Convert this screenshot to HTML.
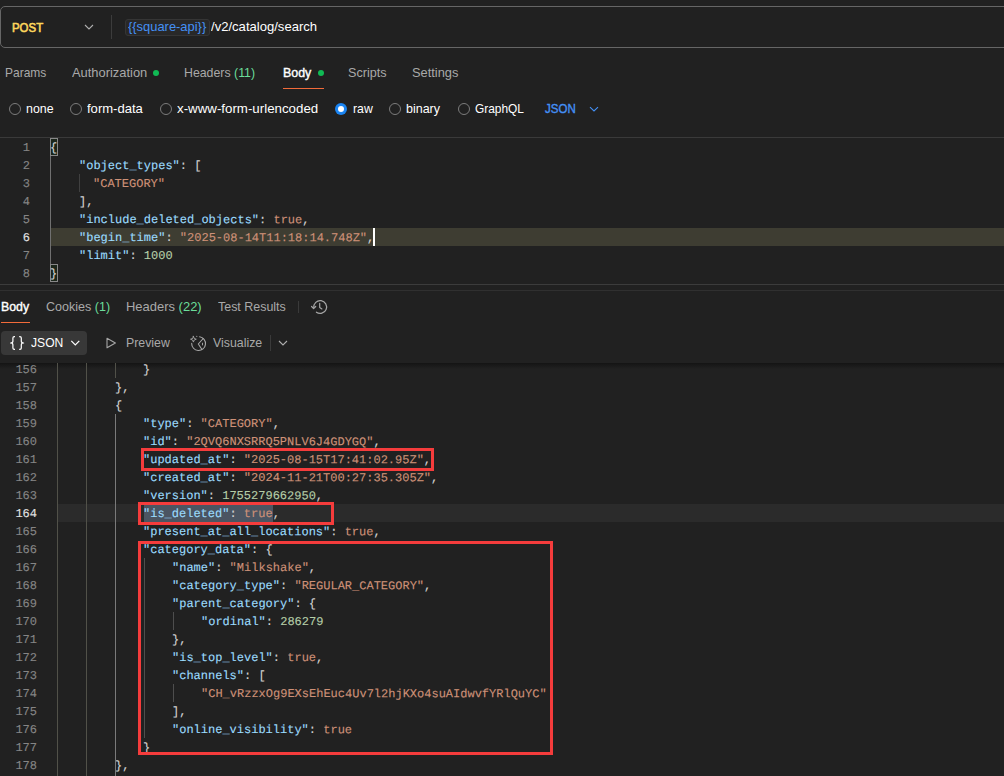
<!DOCTYPE html>
<html lang="en"><head><meta charset="utf-8"><title>Postman</title>
<style>
html,body{margin:0;padding:0;}
body{width:1004px;height:776px;overflow:hidden;background:#212121;position:relative;font-family:"Liberation Sans",sans-serif;font-size:13px;color:#a6a6a6;}
.a{position:absolute;white-space:nowrap;}
.t{position:absolute;white-space:nowrap;line-height:16px;height:16px;font-size:13px;color:#a9a9a9;transform-origin:0 50%;}
.w{color:#fff;}
.g{color:#6bdd9a;}
.b{color:#4490f5;}
.dot{position:absolute;width:6.6px;height:6.6px;border-radius:50%;background:#10ba54;}
.radio{position:absolute;width:10px;height:10px;border:1px solid #7c7c7c;border-radius:50%;}
.code{position:absolute;left:0;font-family:"Liberation Mono",monospace;font-size:12px;line-height:18px;white-space:pre;-webkit-text-stroke:0.12px currentColor;}
.ln{position:absolute;left:0;width:30px;text-align:right;color:#858585;height:18px;transform:rotate(0.05deg);transform-origin:0 12px;}
.ln.act{color:#e0e0e0;}
.cl{position:absolute;height:18px;transform:rotate(0.05deg);transform-origin:0 12px;}
.k{color:#9cdcfe;}.s{color:#ce9178;}.n{color:#b5cea8;}.p{color:#d4d4d4;}
.guide{position:absolute;width:1px;background:#404040;}
.red{position:absolute;border:3px solid #f53c3c;box-sizing:border-box;}
</style></head><body>

<div class="a" style="left:0;top:6px;width:1010px;height:42px;border:1px solid #666;border-radius:5px;box-sizing:border-box;"></div>
<div class="t " id="post" style="left:12.17px;top:19.5px;transform:scaleX(0.8792);-webkit-text-stroke:0.65px #fcd65c;color:#fcd65c;">POST</div>
<svg class="a" style="left:83px;top:22px" width="12" height="10" viewBox="0 0 12 10"><path d="M2 3 L6 6.9 L10 3" fill="none" stroke="#b0b0b0" stroke-width="1.05"/></svg>
<div class="a" style="left:111px;top:15px;width:1px;height:24px;background:#3c3c3c;"></div>
<div class="a" style="left:125px;top:18.5px;width:85px;height:17px;border-radius:3px;background:#282828;border:1px solid #353535;box-sizing:border-box;"></div>
<div class="t b" id="var" style="left:127.60px;top:19px;transform:scaleX(0.9924);">{{square-api}}</div>
<div class="t w" id="path" style="left:211.20px;top:19px;transform:scaleX(1.0057);">/v2/catalog/search</div>
<div class="t " id="t1" style="left:5.03px;top:65px;transform:scaleX(0.9230);">Params</div>
<div class="t " id="t2" style="left:71.79px;top:65px;transform:scaleX(0.9921);">Authorization</div>
<div class="dot" style="left:152.7px;top:69.7px;"></div>
<div class="t " id="t3" style="left:183.81px;top:65px;transform:scaleX(0.9487);">Headers <span class="g">(11)</span></div>
<div class="t w" id="t4" style="left:283.00px;top:65px;transform:scaleX(0.9556);-webkit-text-stroke:0.4px #fff;">Body</div>
<div class="dot" style="left:317.8px;top:69.7px;"></div>
<div class="a" style="left:283px;top:88px;width:41px;height:1px;background:#f26b3a;"></div>
<div class="t " id="t5" style="left:348.00px;top:65px;transform:scaleX(0.9700);">Scripts</div>
<div class="t " id="t6" style="left:412.20px;top:65px;transform:scaleX(0.9873);">Settings</div>
<div class="radio" style="left:8.9px;top:103px;"></div>
<div class="t w" id="r1" style="left:25.79px;top:100.5px;transform:scaleX(0.9518);">none</div>
<div class="radio" style="left:69.7px;top:103px;"></div>
<div class="t w" id="r2" style="left:87.20px;top:100.5px;transform:scaleX(1.0036);">form-data</div>
<div class="radio" style="left:159.8px;top:103px;"></div>
<div class="t w" id="r3" style="left:177.21px;top:100.5px;transform:scaleX(1.0232);">x-www-form-urlencoded</div>
<div class="a" style="left:335px;top:103px;width:12px;height:12px;border-radius:50%;background:#1a84f2;"></div><div class="a" style="left:338px;top:106px;width:6px;height:6px;border-radius:50%;background:#fff;"></div>
<div class="t w" id="r4" style="left:352.72px;top:100.5px;transform:scaleX(0.9437);">raw</div>
<div class="radio" style="left:389px;top:103px;"></div>
<div class="t w" id="r5" style="left:406.01px;top:100.5px;transform:scaleX(0.9611);">binary</div>
<div class="radio" style="left:457.8px;top:103px;"></div>
<div class="t w" id="r6" style="left:475.22px;top:100.5px;transform:scaleX(0.9148);">GraphQL</div>
<div class="t b" id="r7" style="left:544.63px;top:100.5px;transform:scaleX(0.8859);-webkit-text-stroke:0.4px #4490f5;">JSON</div>
<svg class="a" style="left:588.2px;top:103.6px" width="12" height="10" viewBox="0 0 12 10"><path d="M2 3.2 L6 7 L10 3.2" fill="none" stroke="#4490f5" stroke-width="1.1"/></svg>
<div class="a" style="left:0;top:137px;width:1004px;height:1px;background:#3a3a3a;"></div>
<div class="a" style="left:51px;top:228px;width:953px;height:18px;background:#3e3d32;"></div>
<div class="a" style="left:50px;top:138px;width:8px;height:18px;border:1px solid #888;box-sizing:border-box;background:#1b261b;"></div>
<div class="a" style="left:50px;top:264px;width:8px;height:18px;border:1px solid #888;box-sizing:border-box;background:#1b261b;"></div>
<div class="code" style="top:139px;width:1004px;height:146px;">
<div class="ln" style="top:0px;">1</div><div class="cl" style="top:0px;left:49.80px;"><span class="p">{</span></div>
<div class="ln" style="top:18px;">2</div><div class="cl" style="top:18px;left:78.70px;"><span class="k">"object_types"</span><span class="p">: [</span></div>
<div class="ln" style="top:36px;">3</div><div class="cl" style="top:36px;left:93.14px;"><span class="s">"CATEGORY"</span></div>
<div class="ln" style="top:54px;">4</div><div class="cl" style="top:54px;left:78.70px;"><span class="p">],</span></div>
<div class="ln" style="top:72px;">5</div><div class="cl" style="top:72px;left:78.70px;"><span class="k">"include_deleted_objects"</span><span class="p">: </span><span class="s">true</span><span class="p">,</span></div>
<div class="ln act" style="top:90px;">6</div><div class="cl" style="top:90px;left:78.70px;"><span class="k">"begin_time"</span><span class="p">: </span><span class="s">"2025-08-14T11:18:14.748Z"</span><span class="p">,</span></div>
<div class="ln" style="top:108px;">7</div><div class="cl" style="top:108px;left:78.70px;"><span class="k">"limit"</span><span class="p">: </span><span class="n">1000</span></div>
<div class="ln" style="top:126px;">8</div><div class="cl" style="top:126px;left:49.80px;"><span class="p">}</span></div>
</div>
<div class="guide" style="left:79px;top:174px;height:18px;"></div>
<div class="a" style="left:50px;top:156px;width:1px;height:108px;background:#707070;"></div>
<div class="a" style="left:373px;top:228px;width:2px;height:18px;background:#fff;"></div>
<div class="a" style="left:0;top:284px;width:1004px;height:1px;background:#3c3c3c;"></div>
<div class="a" style="left:0;top:290px;width:1004px;height:1px;background:#303030;"></div>
<div class="t w" id="q1" style="left:0.79px;top:299px;transform:scaleX(0.9490);-webkit-text-stroke:0.4px #fff;">Body</div>
<div class="a" style="left:1px;top:322px;width:29px;height:1px;background:#f26b3a;"></div>
<div class="t " id="q2" style="left:46.19px;top:299px;transform:scaleX(0.9637);">Cookies <span class="g">(1)</span></div>
<div class="t " id="q3" style="left:125.50px;top:299px;transform:scaleX(0.9975);">Headers <span class="g">(22)</span></div>
<div class="t " id="q4" style="left:217.60px;top:299px;transform:scaleX(0.9577);">Test Results</div>
<div class="a" style="left:298px;top:301px;width:1px;height:12px;background:#3a3a3a;"></div>
<svg class="a" style="left:310px;top:298px" width="20" height="18" viewBox="310 298 20 18" fill="none" stroke="#a6a6a6" stroke-width="1.2" stroke-linecap="round" stroke-linejoin="round"><path d="M313.8 307.6 A6.4 6.4 0 1 1 316.4 312.2"/><path d="M311.6 306.5 L313.6 308.6 L315.7 306.5"/><path d="M319.7 303.3 V307.5 L321.9 308.9"/></svg>
<div class="a" style="left:1px;top:331px;width:86px;height:24px;border-radius:4px;background:#383838;"></div>
<svg class="a" style="left:8px;top:334px" width="20" height="18" viewBox="8 334 20 18" fill="none" stroke="#fff" stroke-width="1.2" stroke-linejoin="round"><path d="M15 336.6 H14.3 Q12.9 336.6 12.9 338 V341.3 Q12.9 343 10.6 343 Q12.9 343 12.9 344.7 V348 Q12.9 349.4 14.3 349.4 H15"/><path d="M19.2 336.6 H19.9 Q21.3 336.6 21.3 338 V341.3 Q21.3 343 23.6 343 Q21.3 343 21.3 344.7 V348 Q21.3 349.4 19.9 349.4 H19.2"/></svg>
<div class="t w" id="j1" style="left:31.35px;top:335px;transform:scaleX(0.9320);">JSON</div>
<svg class="a" style="left:69px;top:338px" width="12" height="10" viewBox="0 0 12 10"><path d="M2.3 2.8 L6.3 7 L10.3 2.8" fill="none" stroke="#fff" stroke-width="1.2"/></svg>
<svg class="a" style="left:104px;top:335px" width="16" height="16" viewBox="104 335 16 16"><path d="M107 338.2 L115.4 343 L107 347.8 Z" fill="none" stroke="#a6a6a6" stroke-width="1.1" stroke-linejoin="round"/></svg>
<div class="t " id="j2" style="left:125.65px;top:335px;transform:scaleX(0.9478);">Preview</div>
<svg class="a" style="left:188px;top:333px" width="22" height="20" viewBox="188 333 22 20" fill="none" stroke="#a6a6a6" stroke-width="1.1" stroke-linecap="round" stroke-linejoin="round"><path d="M199.6 336.8 A6.9 6.9 0 1 1 191.7 343.4"/><path d="M203.2 338.5 L198.3 344 L201.8 349.3"/><ellipse cx="202.5" cy="344" rx="0.55" ry="1.5" fill="#a6a6a6" stroke="none"/><path d="M193.4 336.3 L194.2 338.4 L196.3 339.2 L194.2 340 L193.4 342.1 L192.6 340 L190.5 339.2 L192.6 338.4 Z" stroke-width="0.9"/><circle cx="196.8" cy="336.3" r="0.6" fill="#a6a6a6" stroke="none"/></svg>
<div class="t " id="j3" style="left:213.16px;top:335px;transform:scaleX(0.9500);">Visualize</div>
<div class="a" style="left:270px;top:335px;width:1px;height:16px;background:#3a3a3a;"></div>
<svg class="a" style="left:277px;top:338px" width="12" height="10" viewBox="0 0 12 10"><path d="M2 3 L6 6.9 L10 3" fill="none" stroke="#b0b0b0" stroke-width="1.05"/></svg>
<div class="a" style="left:0;top:362px;width:1004px;height:414px;background:#212121;overflow:hidden;">
<div class="a" style="left:0;top:1px;width:1004px;height:6px;background:linear-gradient(#141414,rgba(33,33,33,0));"></div>
<div class="a" style="left:58px;top:142px;width:946px;height:18px;background:#2b2b2b;"></div>
<div class="a" style="left:143.5px;top:142px;width:129.5px;height:18px;background:#4b5562;"></div>
</div>
<div class="code" style="top:361px;width:1004px;height:416px;">
<div class="ln" style="top:0px;width:37px;">156</div><div class="cl" style="top:0px;left:143.49px;"><span class="p">}</span></div>
<div class="ln" style="top:18px;width:37px;">157</div><div class="cl" style="top:18px;left:114.59px;"><span class="p">},</span></div>
<div class="ln" style="top:36px;width:37px;">158</div><div class="cl" style="top:36px;left:114.59px;"><span class="p">{</span></div>
<div class="ln" style="top:54px;width:37px;">159</div><div class="cl" style="top:54px;left:143.49px;"><span class="k">"type"</span><span class="p">: </span><span class="s">"CATEGORY"</span><span class="p">,</span></div>
<div class="ln" style="top:72px;width:37px;">160</div><div class="cl" style="top:72px;left:143.49px;"><span class="k">"id"</span><span class="p">: </span><span class="s">"2QVQ6NXSRRQ5PNLV6J4GDYGQ"</span><span class="p">,</span></div>
<div class="ln" style="top:90px;width:37px;">161</div><div class="cl" style="top:90px;left:143.49px;"><span class="k">"updated_at"</span><span class="p">: </span><span class="s">"2025-08-15T17:41:02.95Z"</span><span class="p">,</span></div>
<div class="ln" style="top:108px;width:37px;">162</div><div class="cl" style="top:108px;left:143.49px;"><span class="k">"created_at"</span><span class="p">: </span><span class="s">"2024-11-21T00:27:35.305Z"</span><span class="p">,</span></div>
<div class="ln" style="top:126px;width:37px;">163</div><div class="cl" style="top:126px;left:143.49px;"><span class="k">"version"</span><span class="p">: </span><span class="n">1755279662950</span><span class="p">,</span></div>
<div class="ln act" style="top:144px;width:37px;">164</div><div class="cl" style="top:144px;left:143.49px;"><span class="k">"is_deleted"</span><span class="p">: </span><span class="s">true</span><span class="p">,</span></div>
<div class="ln" style="top:162px;width:37px;">165</div><div class="cl" style="top:162px;left:143.49px;"><span class="k">"present_at_all_locations"</span><span class="p">: </span><span class="s">true</span><span class="p">,</span></div>
<div class="ln" style="top:180px;width:37px;">166</div><div class="cl" style="top:180px;left:143.49px;"><span class="k">"category_data"</span><span class="p">: {</span></div>
<div class="ln" style="top:198px;width:37px;">167</div><div class="cl" style="top:198px;left:172.38px;"><span class="k">"name"</span><span class="p">: </span><span class="s">"Milkshake"</span><span class="p">,</span></div>
<div class="ln" style="top:216px;width:37px;">168</div><div class="cl" style="top:216px;left:172.38px;"><span class="k">"category_type"</span><span class="p">: </span><span class="s">"REGULAR_CATEGORY"</span><span class="p">,</span></div>
<div class="ln" style="top:234px;width:37px;">169</div><div class="cl" style="top:234px;left:172.38px;"><span class="k">"parent_category"</span><span class="p">: {</span></div>
<div class="ln" style="top:252px;width:37px;">170</div><div class="cl" style="top:252px;left:201.28px;"><span class="k">"ordinal"</span><span class="p">: </span><span class="n">286279</span></div>
<div class="ln" style="top:270px;width:37px;">171</div><div class="cl" style="top:270px;left:172.38px;"><span class="p">},</span></div>
<div class="ln" style="top:288px;width:37px;">172</div><div class="cl" style="top:288px;left:172.38px;"><span class="k">"is_top_level"</span><span class="p">: </span><span class="s">true</span><span class="p">,</span></div>
<div class="ln" style="top:306px;width:37px;">173</div><div class="cl" style="top:306px;left:172.38px;"><span class="k">"channels"</span><span class="p">: [</span></div>
<div class="ln" style="top:324px;width:37px;">174</div><div class="cl" style="top:324px;left:201.28px;"><span class="s">"CH_vRzzxOg9EXsEhEuc4Uv7l2hjKXo4suAIdwvfYRlQuYC"</span></div>
<div class="ln" style="top:342px;width:37px;">175</div><div class="cl" style="top:342px;left:172.38px;"><span class="p">],</span></div>
<div class="ln" style="top:360px;width:37px;">176</div><div class="cl" style="top:360px;left:172.38px;"><span class="k">"online_visibility"</span><span class="p">: </span><span class="s">true</span></div>
<div class="ln" style="top:378px;width:37px;">177</div><div class="cl" style="top:378px;left:143.49px;"><span class="p">}</span></div>
<div class="ln" style="top:396px;width:37px;">178</div><div class="cl" style="top:396px;left:114.59px;"><span class="p">},</span></div>
</div>
<div class="guide" style="left:57px;top:363px;height:413px;background:#515149;"></div>
<div class="guide" style="left:86px;top:363px;height:413px;background:#515149;"></div>
<div class="guide" style="left:115px;top:363px;height:15px;background:#515149;"></div>
<div class="guide" style="left:115px;top:414px;height:362px;background:#7a7a7a;"></div>
<div class="guide" style="left:143.5px;top:558px;height:180px;background:#4e4e4e;"></div>
<div class="guide" style="left:172.5px;top:612px;height:18px;background:#4e4e4e;"></div>
<div class="guide" style="left:172.5px;top:684px;height:18px;background:#4e4e4e;"></div>
<div class="red" style="left:141px;top:448px;width:293px;height:23px;"></div>
<div class="red" style="left:138px;top:502px;width:196px;height:23px;"></div>
<div class="red" style="left:138px;top:541px;width:415px;height:214px;"></div>
</body></html>
